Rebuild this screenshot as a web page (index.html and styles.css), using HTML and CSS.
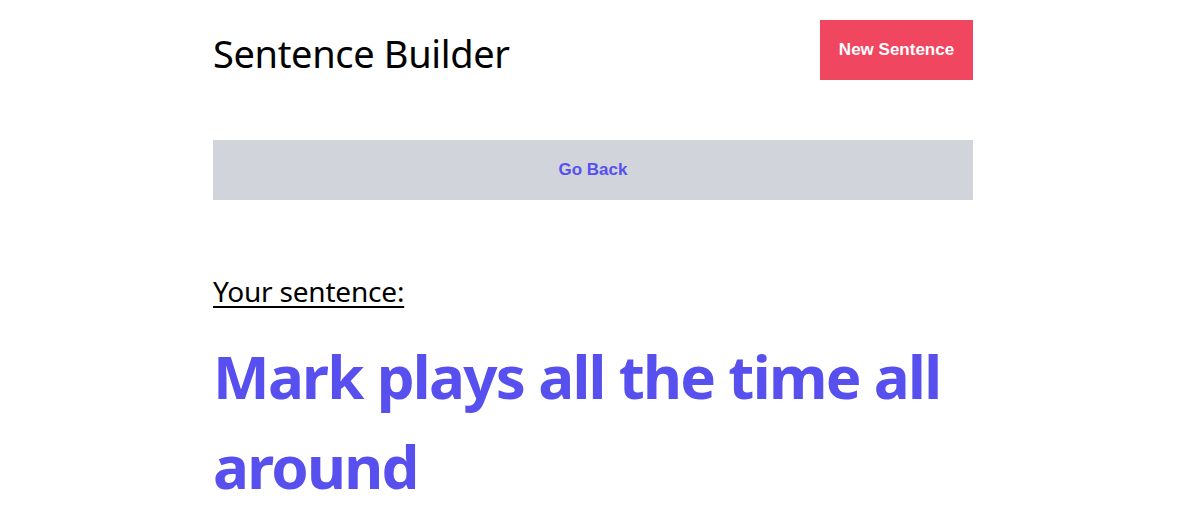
FILE: index.html
```html
<!DOCTYPE html>
<html lang="en">
<head>
<meta charset="utf-8">
<title>Sentence Builder</title>
<link rel="stylesheet" href="styles.css">
</head>
<body>
<div class="page">
  <main class="container">
    <header class="header">
      <h1 class="title">Sentence Builder</h1>
      <button class="btn btn-new" type="button">New Sentence</button>
    </header>
    <button class="btn btn-back" type="button">Go Back</button>
    <section class="result">
      <h2 class="label">Your sentence:</h2>
      <p class="sentence">Mark plays all the time all around</p>
    </section>
  </main>
</div>
</body>
</html>
```

FILE: styles.css
```css
* { box-sizing: border-box; }
html, body { margin: 0; padding: 0; background: #ffffff; }
body { font-family: "Noto Sans", "Open Sans", sans-serif; color: #000; }
.page { display: flex; justify-content: center; padding-right: 15px; }
.container { width: 760px; padding-top: 20px; }
.header { display: flex; justify-content: space-between; align-items: center; height: 60px; }
.title { margin: 6px 0 0; font-size: 38px; font-weight: 400; line-height: 1; letter-spacing: -0.35px; }
.btn { border: 0; cursor: pointer; font-family: "Liberation Sans", Arial, sans-serif; font-weight: 700; font-size: 17px; }
.btn-new { background: #f0465f; color: #ffffff; height: 60px; padding: 0 18px; width: 153px; }
.btn-back { display: block; width: 100%; height: 60px; margin-top: 60px; background: #d1d5db; color: #5750ee; }
.result { margin-top: 75px; }
.label { margin: 0; font-size: 28px; font-weight: 400; line-height: 1.2; letter-spacing: -0.2px; text-decoration: underline; text-decoration-thickness: 2px; text-underline-offset: 4px; }
.sentence { margin: 22px 0 0; font-size: 60px; font-weight: 700; line-height: 90px; color: #5750ee; letter-spacing: -1.7px; }
```
